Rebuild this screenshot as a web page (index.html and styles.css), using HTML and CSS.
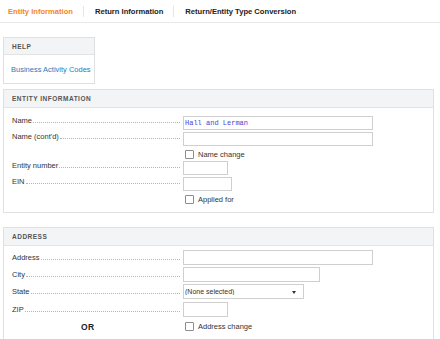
FILE: index.html
```html
<!DOCTYPE html>
<html lang="en">
<head>
    <meta charset="UTF-8">
    <meta name="viewport" content="width=device-width, initial-scale=1.0">
    <title>Entity Information</title>
    <link rel="stylesheet" href="styles.css">
</head>
<body>

    <nav class="tabs">
        <a class="tab active" href="#">Entity Information</a>
        <span class="tab-sep"></span>
        <a class="tab" href="#">Return Information</a>
        <span class="tab-sep"></span>
        <a class="tab" href="#">Return/Entity Type Conversion</a>
    </nav>

    <div class="content">

        <section class="panel help-panel">
            <div class="panel-head">HELP</div>
            <div class="panel-body">
                <a class="help-link" href="#">Business Activity Codes</a>
            </div>
        </section>

        <section class="panel entity-panel">
            <div class="panel-head">ENTITY INFORMATION</div>
            <div class="panel-body">
                <div class="row">
                    <label class="lbl"><span>Name</span><i class="dots"></i></label>
                    <input class="field w-name" type="text" value="Hall and Lerman">
                </div>
                <div class="row">
                    <label class="lbl"><span>Name (cont'd)</span><i class="dots"></i></label>
                    <input class="field w-name" type="text">
                </div>
                <div class="row check-row">
                    <span class="lbl"></span>
                    <label class="check"><input type="checkbox">Name change</label>
                </div>
                <div class="row">
                    <label class="lbl"><span>Entity number</span><i class="dots"></i></label>
                    <input class="field w-num" type="text">
                </div>
                <div class="row">
                    <label class="lbl"><span>EIN</span><i class="dots"></i></label>
                    <input class="field w-ein" type="text">
                </div>
                <div class="row check-row">
                    <span class="lbl"></span>
                    <label class="check"><input type="checkbox">Applied for</label>
                </div>
            </div>
        </section>

        <section class="panel address-panel">
            <div class="panel-head">ADDRESS</div>
            <div class="panel-body">
                <div class="row">
                    <label class="lbl"><span>Address</span><i class="dots"></i></label>
                    <input class="field w-name" type="text">
                </div>
                <div class="row">
                    <label class="lbl"><span>City</span><i class="dots"></i></label>
                    <input class="field w-city" type="text">
                </div>
                <div class="row">
                    <label class="lbl"><span>State</span><i class="dots"></i></label>
                    <div class="select-wrap">
                        <select class="select">
                            <option>(None selected)</option>
                        </select>
                    </div>
                </div>
                <div class="row">
                    <label class="lbl"><span>ZIP</span><i class="dots"></i></label>
                    <input class="field w-num" type="text">
                </div>
                <div class="row check-row or-row">
                    <span class="lbl or">OR</span>
                    <label class="check"><input type="checkbox">Address change</label>
                </div>
            </div>
        </section>

    </div>

</body>
</html>
```

FILE: styles.css
```css
body {
    margin: 0;
    font-family: "Liberation Sans", Arial, sans-serif;
    font-size: 7.5px;
    color: #333;
    background-color: #fff;
}

/* top tabs */
.tabs {
    display: flex;
    align-items: center;
    height: 22px;
    padding-left: 8px;
    border-bottom: 1px solid #e8e8e8;
}

.tab {
    font-size: 7.6px;
    font-weight: bold;
    color: #222;
    text-decoration: none;
}

.tab.active {
    color: #f5862a;
}

.tab-sep {
    width: 1px;
    height: 11px;
    margin: 0 11px 0 10px;
    background-color: #e6e6e6;
}

.content {
    padding: 14px 6px 0 3px;
}

/* panels */
.panel {
    border: 1px solid #e0e0e0;
    background-color: #fff;
}

.panel-head {
    display: flex;
    align-items: center;
    height: 17px;
    padding-left: 8px;
    background-color: #f3f4f6;
    border-bottom: 1px solid #e3e3e3;
    font-size: 6.5px;
    font-weight: bold;
    letter-spacing: 0.5px;
    color: #555;
}

.help-panel {
    width: 90px;
}

.help-panel .panel-head {
    height: 16px;
}

.help-panel .panel-body {
    height: 28px;
    display: flex;
    align-items: center;
    padding-left: 7px;
}

.help-link {
    color: #1f7bbd;
    text-decoration: none;
}

.entity-panel {
    margin-top: 5px;
}

.entity-panel .panel-body {
    padding: 8px 0 6px 8px;
}

.address-panel {
    margin-top: 14px;
}

.address-panel .panel-body {
    padding: 4px 0 12px 8px;
}

/* form rows */
.row {
    display: flex;
    align-items: flex-start;
    margin-bottom: 2px;
}

.lbl {
    box-sizing: border-box;
    display: flex;
    align-items: baseline;
    width: 171px;
    flex-shrink: 0;
    line-height: 9px;
}

.address-panel .lbl {
    padding-top: 2.5px;
}

.dots {
    flex: 1;
    height: 6px;
    margin: 0 3px 0 1px;
    border-bottom: 1px dotted #b5b5b5;
}

.field {
    box-sizing: border-box;
    height: 14px;
    padding: 0 1px;
    border: 1px solid #cfcfcf;
    border-radius: 0;
    font-family: "Liberation Mono", "Courier New", monospace;
    font-size: 7px;
    color: #4a3fd6;
    outline: none;
}

.address-panel .field {
    height: 15px;
}

.w-name { width: 190px; }
.w-city { width: 137px; }
.w-num  { width: 45px; }
.w-ein  { width: 49px; }

.select-wrap {
    position: relative;
    margin-bottom: 1px;
}

.select {
    box-sizing: border-box;
    width: 121px;
    height: 15px;
    padding: 0 0 0 1px;
    border: 1px solid #cfcfcf;
    border-radius: 0;
    background-color: #fff;
    appearance: none;
    -webkit-appearance: none;
    font-family: "Liberation Sans", Arial, sans-serif;
    font-size: 7px;
    color: #333;
}

.select-wrap::after {
    content: "";
    position: absolute;
    top: 6.5px;
    left: 109px;
    border-left: 2.5px solid transparent;
    border-right: 2.5px solid transparent;
    border-top: 3px solid #333;
}

.check-row {
    height: 13px;
    margin-bottom: 0;
    align-items: center;
}

.check {
    display: flex;
    align-items: center;
    margin-left: 2px;
    color: #333;
}

.check input {
    appearance: none;
    -webkit-appearance: none;
    box-sizing: border-box;
    width: 9px;
    height: 9px;
    margin: 0 4px 0 0;
    border: 1px solid #8c8c8c;
    border-radius: 1px;
    background-color: #fff;
}

.or-row {
    height: 14px;
    margin-top: 2px;
}

.lbl.or {
    display: block;
    padding-left: 69px;
    font-size: 8.5px;
    font-weight: bold;
    letter-spacing: 0.5px;
    color: #222;
    line-height: 14px;
}
```
